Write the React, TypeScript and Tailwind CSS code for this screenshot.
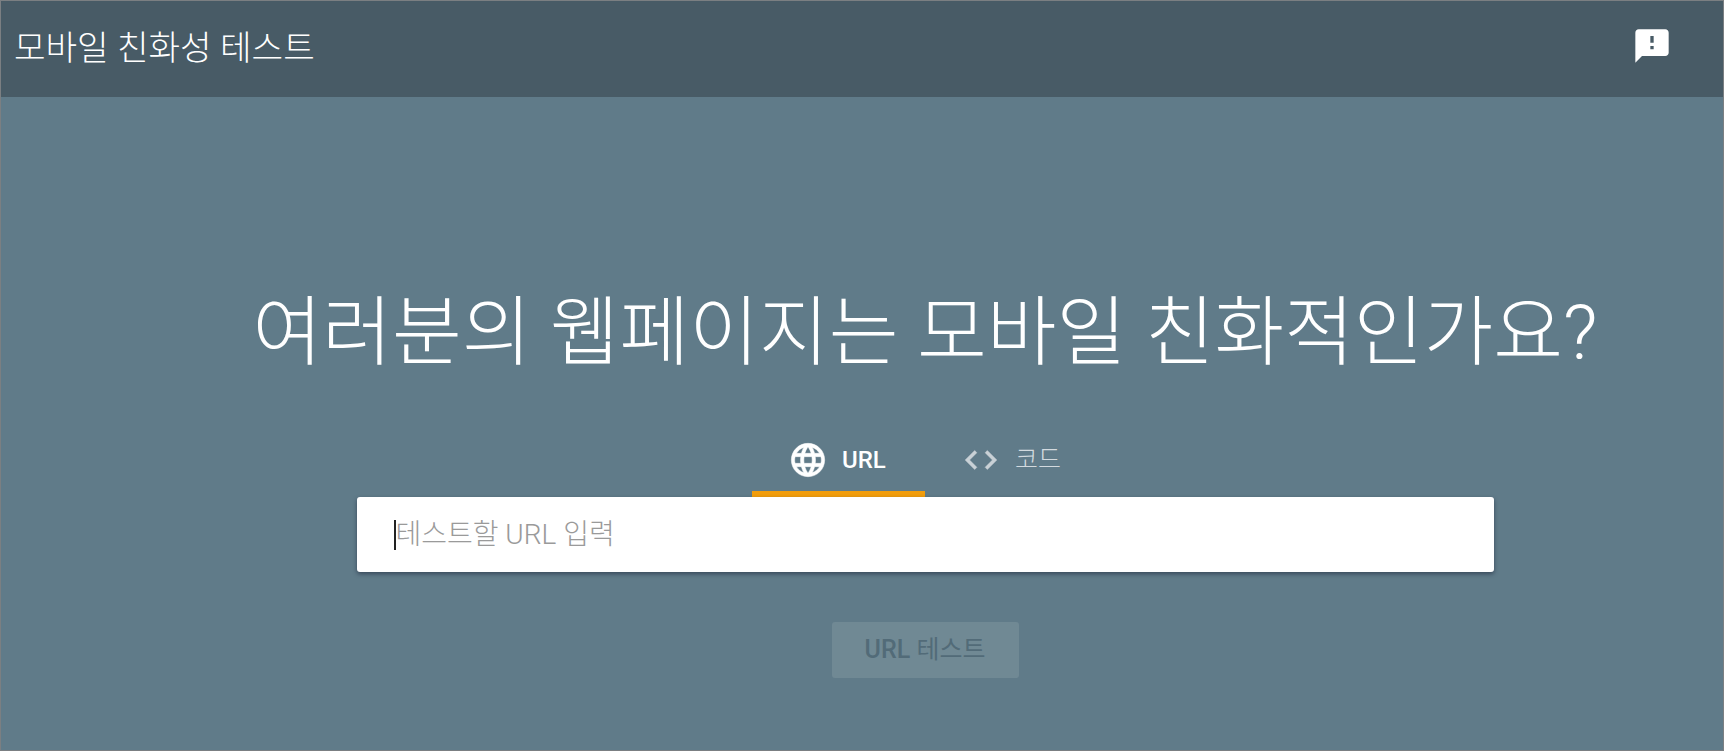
const font = "font-['Roboto','Noto_Sans_CJK_KR',sans-serif]";

function FeedbackIcon() {
  return (
    <svg className="w-[40px] h-[40px]" viewBox="0 0 24 24" fill="#fff">
      <path d="M20 2H4c-1.1 0-1.99.9-1.99 2L2 22l4-4h14c1.1 0 2-.9 2-2V4c0-1.1-.9-2-2-2zm-7 12h-2v-2h2v2zm0-4h-2V6h2v4z" />
    </svg>
  );
}

function LanguageIcon() {
  return (
    <svg className="w-[40px] h-[40px]" viewBox="0 0 24 24" fill="#fff" stroke="#fff" strokeWidth={0.3}>
      <path d="M11.99 2C6.47 2 2 6.48 2 12s4.47 10 9.99 10C17.52 22 22 17.52 22 12S17.52 2 11.99 2zm6.93 6h-2.95c-.32-1.25-.78-2.45-1.38-3.56 1.84.63 3.37 1.91 4.33 3.56zM12 4.04c.83 1.2 1.48 2.53 1.91 3.96h-3.82c.43-1.43 1.08-2.76 1.91-3.96zM4.26 14C4.1 13.36 4 12.69 4 12s.1-1.36.26-2h3.38c-.08.66-.14 1.32-.14 2 0 .68.06 1.34.14 2H4.26zm.82 2h2.95c.32 1.25.78 2.45 1.38 3.56-1.84-.63-3.37-1.9-4.33-3.56zm2.95-8H5.08c.96-1.66 2.49-2.93 4.33-3.56C8.81 5.55 8.35 6.75 8.03 8zM12 19.96c-.83-1.2-1.48-2.53-1.91-3.96h3.82c-.43 1.43-1.08 2.76-1.91 3.96zM14.34 14H9.66c-.09-.66-.16-1.32-.16-2 0-.68.07-1.35.16-2h4.68c.09.65.16 1.32.16 2 0 .68-.07 1.34-.16 2zm.25 5.56c.6-1.11 1.06-2.31 1.38-3.56h2.95c-.96 1.65-2.49 2.93-4.33 3.56zM16.36 14c.08-.66.14-1.32.14-2 0-.68-.06-1.34-.14-2h3.38c.16.64.26 1.31.26 2s-.1 1.36-.26 2h-3.38z" />
    </svg>
  );
}

function CodeIcon() {
  return (
    <svg className="w-[38px] h-[38px]" viewBox="0 0 24 24" fill="#c9d1d6" stroke="#c9d1d6" strokeWidth={0.3}>
      <path d="M9.4 16.6 4.8 12l4.6-4.6L8 6l-6 6 6 6 1.4-1.4zm5.2 0 4.6-4.6-4.6-4.6L16 6l6 6-6 6-1.4-1.4z" />
    </svg>
  );
}

export default function App() {
  return (
    <div className={`${font} w-full h-[751px] overflow-hidden border border-[#7b7f82] bg-[#607b89] flex flex-col`}>
      <header className="h-[96px] shrink-0 bg-[#485b66] flex items-center justify-between pl-[13px] pr-[51px]">
        <h1 className="text-[34.3px] font-light text-white leading-none pb-[2px]">모바일 친화성 테스트</h1>
        <div className="pb-[6px]">
          <FeedbackIcon />
        </div>
      </header>

      <main className="flex-1 flex flex-col items-center pl-[126px]">
        <h2 className="mt-[199px] text-[75.8px] leading-[76px] font-light text-white whitespace-nowrap">
          여러분의 웹페이지는 모바일 친화적인가요?
        </h2>

        <div className="mt-[59px] flex h-[66px]">
          <div className="w-[173px] flex items-center gap-[14px] pl-[36px] border-b-[6px] border-[#f29d0b] text-white pb-[2px]">
            <LanguageIcon />
            <span className="text-[24px] font-medium">URL</span>
          </div>
          <div className="w-[173px] flex items-center gap-[15px] pl-[37px] text-[#d3dadf] pb-[8px]">
            <CodeIcon />
            <span className="text-[25px] font-light">코드</span>
          </div>
        </div>

        <div className="w-[1137px] h-[75px] bg-white rounded-[3px] shadow-[0_2px_4px_rgba(30,40,60,0.6)] flex items-center pl-[37px]">
          <div className="w-[2px] h-[30px] bg-[#222]" />
          <span className="text-[28px] font-light text-[#9a9a9a] leading-none">테스트할 URL 입력</span>
        </div>

        <button className="mt-[50px] w-[187px] h-[56px] rounded-[3px] bg-[#708994] text-[#526b78] text-[25px] flex items-center justify-center">
          <span className="font-medium">URL</span>&nbsp;테스트
        </button>
      </main>
    </div>
  );
}
